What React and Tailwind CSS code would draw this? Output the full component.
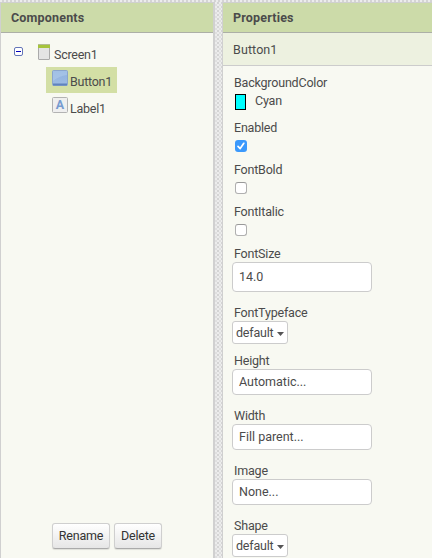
import React from "react";

const label = "h-4 pl-[2px] leading-4 tracking-[-0.2px] whitespace-nowrap";

function Check({ name, checked }) {
  return (
    <div className="h-[42px]">
      <div className={label}>{name}</div>
      <div className="pt-1 pl-[3px]">
        {checked ? (
          <div className="flex h-3 w-3 items-center justify-center rounded-[3px] bg-[#3b99fc]">
            <svg width="12" height="12" viewBox="0 0 12 12" fill="none" stroke="#fff" strokeWidth="1.7" strokeLinecap="round" strokeLinejoin="round">
              <path d="M3 6.3 5.2 8.6 8.8 3.3" />
            </svg>
          </div>
        ) : (
          <div className="h-3 w-3 rounded-[3px] border border-[#b0b0b0] border-t-[#999999] bg-white" />
        )}
      </div>
    </div>
  );
}

function Field({ name, value, tall }) {
  return (
    <div className={tall ? "h-[59px]" : "h-[55px]"}>
      <div className={label}>{name}</div>
      <div className={"flex w-[140px] items-center rounded-[4px] border border-[#cccccc] bg-white pl-[6px] " + (tall ? "h-[30px] pt-px" : "h-[26px]")}>
        {value}
      </div>
    </div>
  );
}

function Choice({ name }) {
  return (
    <div className="h-12">
      <div className={label}>{name}</div>
      <div className="flex h-[23px] w-14 items-center rounded-[3px] border border-[#cccccc] bg-white pt-[2px] pl-[3px]">
        <span className="tracking-[-0.2px]">default</span>
        <svg className="ml-[4px]" width="7" height="4" viewBox="0 0 7 4">
          <path d="M0 0h7L3.5 4z" fill="#555" />
        </svg>
      </div>
    </div>
  );
}

function Dots({ className }) {
  return (
    <div className={"bg-[#ececec] bg-[conic-gradient(#d4d4d4_25%,#ececec_0_50%,#dfdfdf_0_75%,#ececec_0)] bg-[size:4px_4px] " + className} />
  );
}

const heading = "flex h-[30px] shrink-0 items-center border-b border-[#acafa7] bg-[#ccdba9] pt-px pl-[10px] font-bold tracking-[0.18px]";
const action = "flex h-[26px] items-center justify-center rounded-[3px] border border-[#cfcfcf] border-b-[#aaaaaa] bg-linear-to-b from-white to-[#e6e6e6] tracking-[-0.2px] text-[#333] shadow-[0_1px_1px_rgba(0,0,0,0.1)]";

export default function App() {
  return (
    <div className="flex h-[558px] w-[432px] flex-col overflow-hidden bg-[#f8f9f2] font-['Roboto',sans-serif] text-[12.5px] text-[#4b4b4b]">
      <Dots className="h-[2px] shrink-0" />
      <div className="flex min-h-0 flex-1">
        <div className="flex w-[215px] shrink-0 flex-col border-t border-r-2 border-l border-[#d0d0d0]">
          <div className={heading}>Components</div>
          <div className="flex h-[34px] items-end pl-[13px]">
            <svg className="mb-[11px]" width="9" height="9" viewBox="0 0 9 9">
              <rect x=".5" y=".5" width="8" height="8" rx="1.5" fill="#fff" stroke="#6475b8" />
              <path d="M2 4.5h5" stroke="#0000bb" />
            </svg>
            <svg className="mb-[7px] ml-[15px]" width="12" height="16" viewBox="0 0 12 16">
              <rect x=".5" y=".5" width="11" height="15" rx=".5" fill="#e4e4e4" stroke="#aaa" />
              <path d="M0 0h12v4H0z" fill="#a6c43c" />
              <path d="M0 .5h12" stroke="#b3bc93" />
            </svg>
            <span className="mb-[4px] ml-[4px] leading-4 tracking-[-0.25px]">Screen1</span>
          </div>
          <div className="ml-[45px] flex h-[26px] w-[71px] bg-[#d3dfa5] pl-[6px]">
            <svg className="mt-[3px]" width="16" height="16" viewBox="0 0 16 16">
              <defs>
                <linearGradient id="blue" x1="0" y1="0" x2="0" y2="1">
                  <stop stopColor="#8fb2df" />
                  <stop offset="1" stopColor="#9dbbe3" />
                </linearGradient>
              </defs>
              <rect x=".5" y=".5" width="15" height="15" rx="1" fill="url(#blue)" stroke="#8ba5cc" />
              <path d="M1 1h14v4Q7 6 1 11z" fill="#c2d9f1" opacity=".35" />
              <path d="M1 14.5h14" stroke="#5f83bd" strokeWidth="2" />
            </svg>
            <span className="mt-[7px] ml-[2px] leading-4 tracking-[-0.25px]">Button1</span>
          </div>
          <div className="ml-[51px] flex h-[27px]">
            <svg className="mt-[4px]" width="16" height="16" viewBox="0 0 16 16">
              <rect x=".5" y=".5" width="15" height="15" rx="1" fill="#efefef" stroke="#b3b3b3" />
              <text x="8" y="12.3" textAnchor="middle" fontSize="12.5" fontWeight="700" fontFamily="Roboto" fill="#779bd0">A</text>
            </svg>
            <span className="mt-[8px] ml-[2px] leading-4 tracking-[-0.25px]">Label1</span>
          </div>
          <div className="mt-auto mb-[9px] ml-[51px] flex gap-1">
            <div className={action + " w-[58px]"}>Rename</div>
            <div className={action + " w-12"}>Delete</div>
          </div>
        </div>
        <Dots className="w-[7px] shrink-0" />
        <div className="min-w-0 flex-1 border-t border-l border-[#d0d0d0]">
          <div className={heading}>Properties</div>
          <div className="flex h-[33px] items-center border-b border-[#cccccc] bg-[#edf1e0] pt-[2px] pl-[10px] tracking-[0.1px]">Button1</div>
          <div className="pt-[9px] pl-[9px]">
            <div className="h-[45px]">
              <div className={label}>BackgroundColor</div>
              <div className="flex h-5 items-center pt-px pl-[3px]">
                <div className="h-4 w-[11px] border border-black bg-[#00ffff]" />
                <span className="ml-[9px] tracking-[-0.2px]">Cyan</span>
              </div>
            </div>
            <Check name="Enabled" checked />
            <Check name="FontBold" />
            <Check name="FontItalic" />
            <Field name="FontSize" value="14.0" tall />
            <Choice name="FontTypeface" />
            <Field name="Height" value="Automatic..." />
            <Field name="Width" value="Fill parent..." />
            <Field name="Image" value="None..." />
            <Choice name="Shape" />
          </div>
        </div>
      </div>
    </div>
  );
}
